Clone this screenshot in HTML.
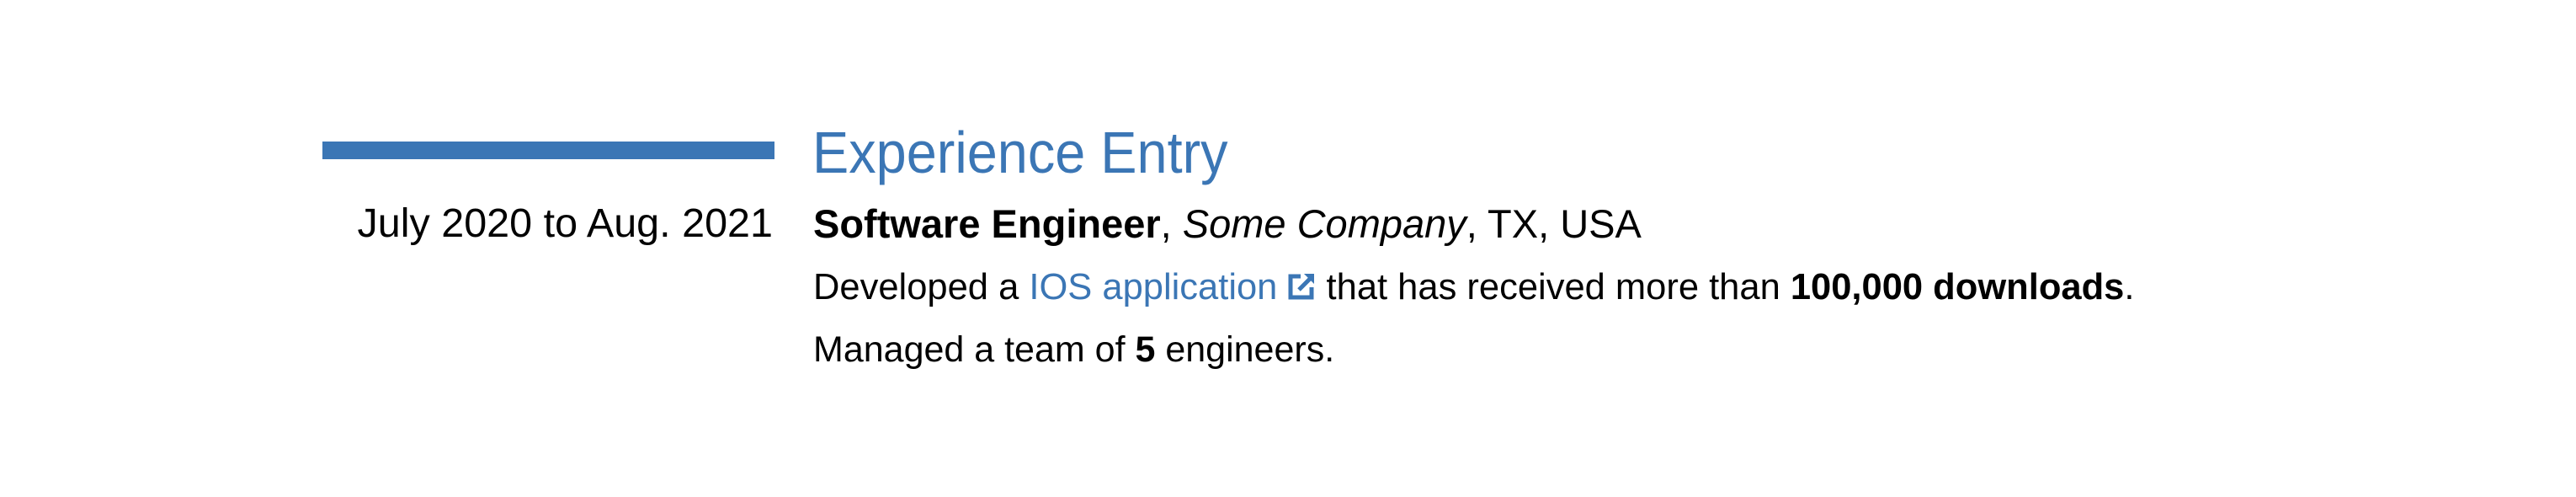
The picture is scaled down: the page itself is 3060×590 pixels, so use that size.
<!DOCTYPE html>
<html><head><style>
body{margin:0;width:3060px;height:590px;background:#fff;position:relative;overflow:hidden;font-family:"Liberation Sans",sans-serif;color:#000}
.a{position:absolute;white-space:nowrap;line-height:1}
.blue{color:#3b76b5}
</style></head><body>
<div style="position:absolute;left:383px;top:168px;width:537px;height:21px;background:#3b76b5"></div>
<div class="a blue" style="left:965px;top:146px;font-size:70px;transform:scaleX(0.926);transform-origin:left">Experience Entry</div>
<div class="a" style="right:2142px;top:241px;font-size:48.5px">July 2020 to Aug. 2021</div>
<div class="a" style="left:966px;top:242px;font-size:47px"><b>Software Engineer</b>, <i>Some Company</i>, TX, USA</div>
<div class="a" style="left:966px;top:320px;font-size:43.5px">Developed a <span class="blue">IOS application <svg width="34" height="34" viewBox="0 0 34 34" style="vertical-align:-2px"><path d="M16 5H4v25h25V18" fill="none" stroke="#3b76b5" stroke-width="5"/><path d="M14 21L28 7" stroke="#3b76b5" stroke-width="5"/><path d="M20 2h12v12z" fill="#3b76b5"/></svg></span> that has received more than <b>100,000 downloads</b>.</div>
<div class="a" style="left:966px;top:394px;font-size:43px">Managed a team of <b>5</b> engineers.</div>
</body></html>
